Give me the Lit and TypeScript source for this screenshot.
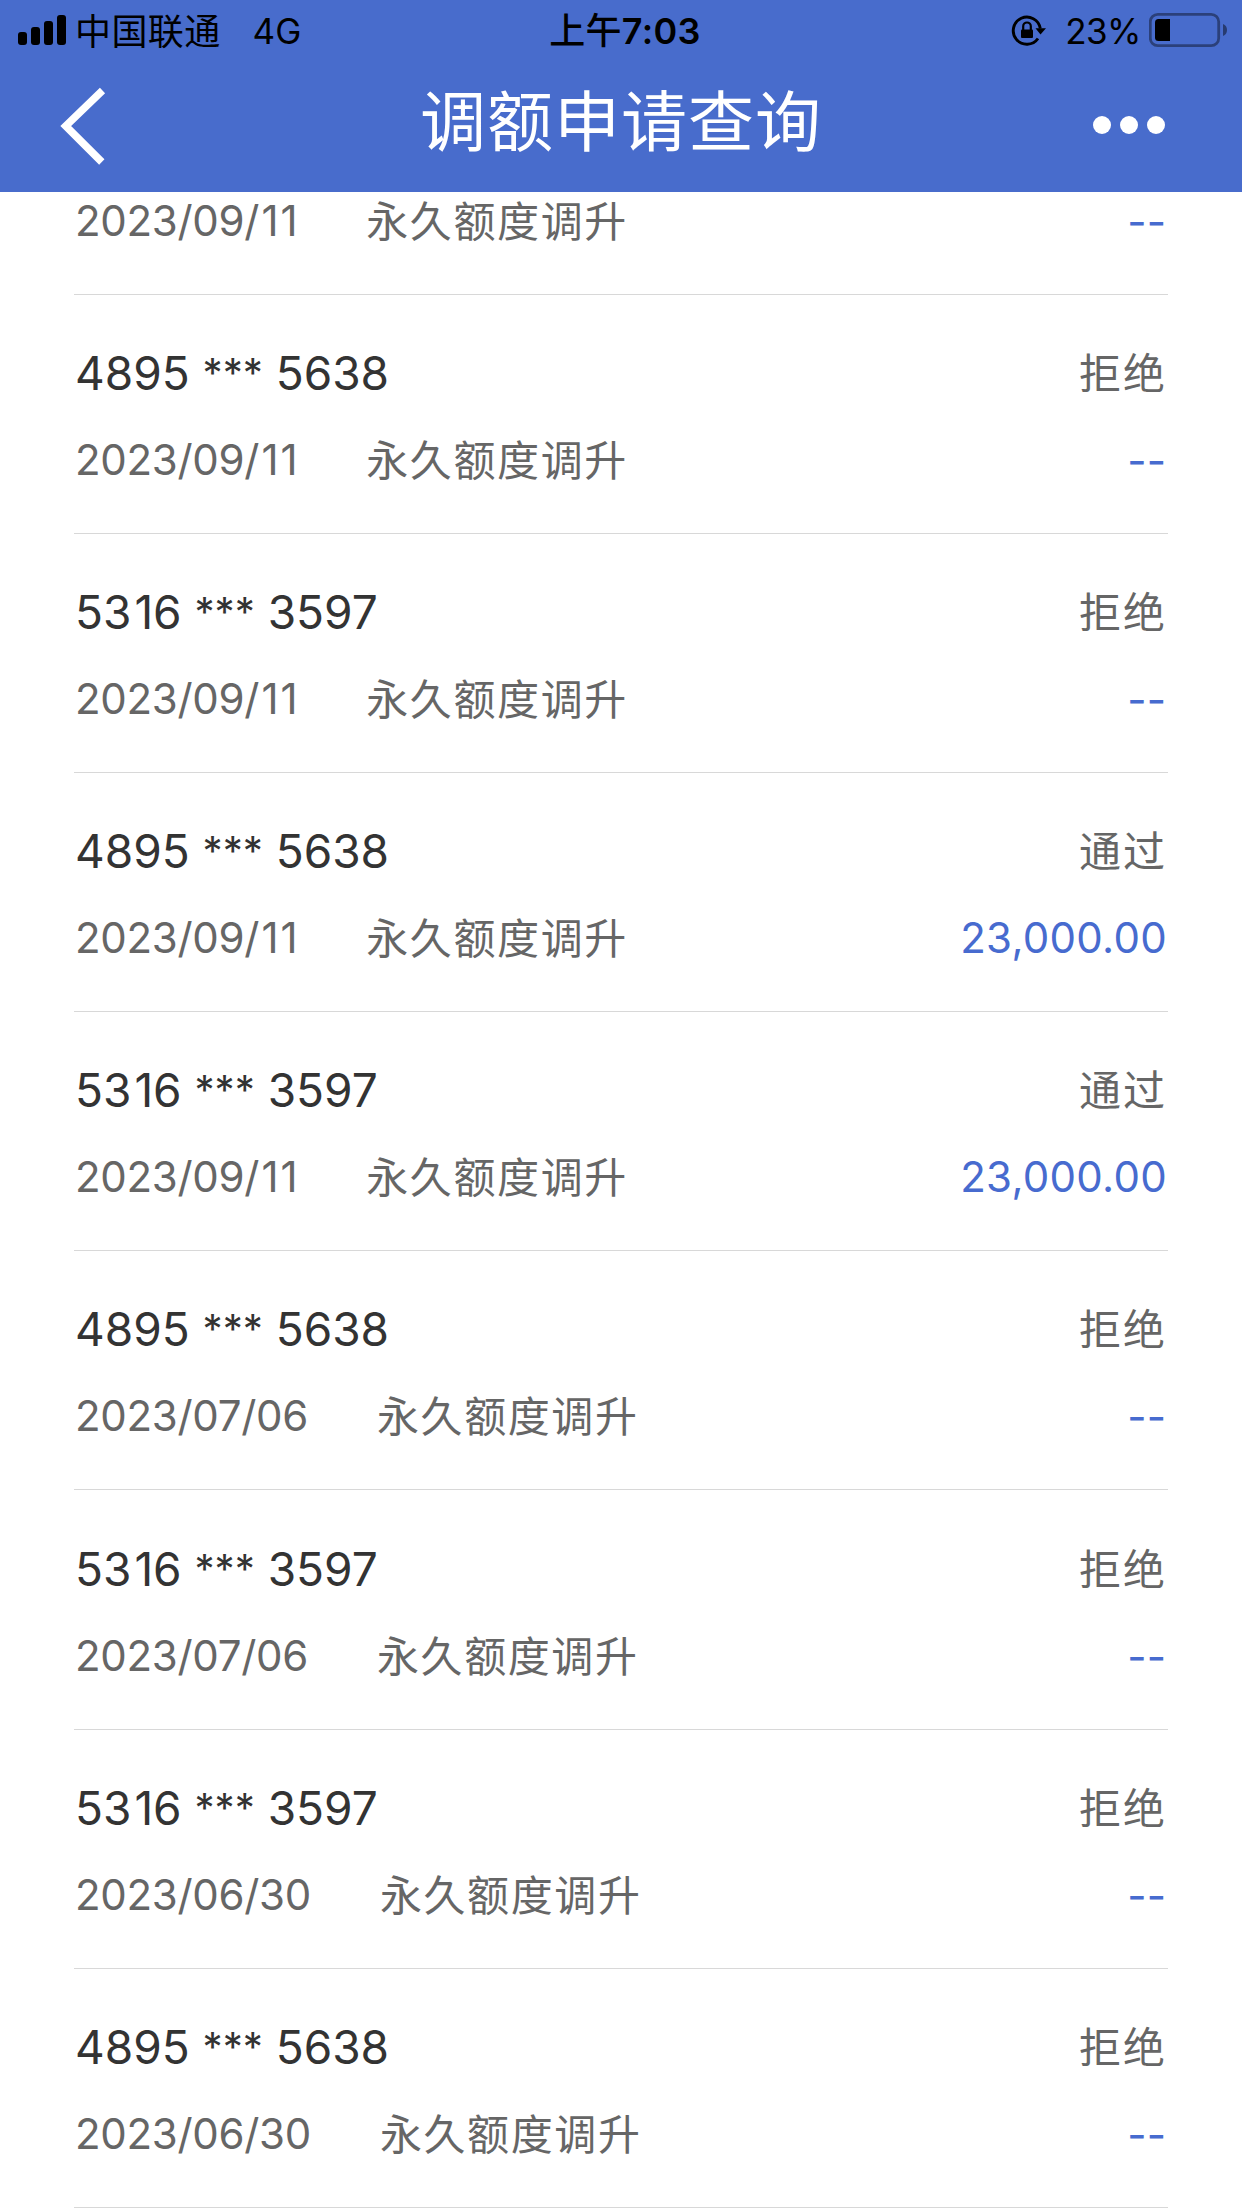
import { LitElement, html, css, svg, nothing } from "lit";
import { customElement, property } from "lit/decorators.js";

interface Entry {
  card?: string;
  date: string;
  status?: string;
  amount: string;
}

const KIND = "永久额度调升";

const ENTRIES: Entry[] = [
  { date: "2023/09/11", amount: "--" },
  { card: "4895 *** 5638", date: "2023/09/11", status: "拒绝", amount: "--" },
  { card: "5316 *** 3597", date: "2023/09/11", status: "拒绝", amount: "--" },
  { card: "4895 *** 5638", date: "2023/09/11", status: "通过", amount: "23,000.00" },
  { card: "5316 *** 3597", date: "2023/09/11", status: "通过", amount: "23,000.00" },
  { card: "4895 *** 5638", date: "2023/07/06", status: "拒绝", amount: "--" },
  { card: "5316 *** 3597", date: "2023/07/06", status: "拒绝", amount: "--" },
  { card: "5316 *** 3597", date: "2023/06/30", status: "拒绝", amount: "--" },
  { card: "4895 *** 5638", date: "2023/06/30", status: "拒绝", amount: "--" },
];

/* Inter's "1" is narrow and its asterisks are wide; both get their own metrics. */
const tuned = (text: string) =>
  text
    .split(/(1|\*+)/)
    .map((part) =>
      part === "1"
        ? html`<span class="one">1</span>`
        : part.startsWith("*")
          ? html`<span class="mask">${part}</span>`
          : part
    );

@customElement("status-bar")
class StatusBar extends LitElement {
  static styles = css`
    :host {
      display: grid;
      grid-template-columns: 1fr auto 1fr;
      height: 62px;
      padding: 0 14px 0 18px;
      box-sizing: border-box;
      color: #000;
      font-size: 35px;
      line-height: 62px;
      white-space: nowrap;
    }
    .side {
      display: flex;
      align-items: flex-start;
    }
    .end {
      justify-content: flex-end;
    }
    svg {
      display: block;
      height: 62px;
      flex: none;
    }
    .carrier {
      margin-left: 8px;
      padding-top: 1px;
      font-size: 36px;
      letter-spacing: 0.4px;
    }
    .network {
      margin-left: 32px;
    }
    .time {
      font-weight: 600;
      font-size: 36px;
      padding-left: 4px;
      letter-spacing: 0.3px;
    }
    .clock-cjk {
      font-weight: 500;
    }
    .battery-text {
      margin: 0 8px 0 18px;
      letter-spacing: -0.5px;
    }
  `;

  render() {
    return html`
      <div class="side">
        <svg width="49" viewBox="0 0 49 62">
          ${[32, 27, 21, 15].map(
            (y, i) => svg`<rect x=${i * 13} y=${y} width="9" height=${45 - y} rx="3" />`
          )}
        </svg>
        <span class="carrier">中国联通</span>
        <span class="network">4G</span>
      </div>
      <div class="time"><span class="clock-cjk">上午</span>7:03</div>
      <div class="side end">
        <svg width="36" viewBox="1012 0 36 62">
          <path
            d="M1039 38.500A13.600 13.600 0 1 1 1041.300 28.500"
            fill="none"
            stroke="#000"
            stroke-width="2.9"
          />
          <path d="M1036.500 28.300H1047L1041.500 34.500Z" />
          <rect x="1022" y="29.5" width="12" height="8.500" rx="1" />
          <path
            d="M1024.200 30V26.300a3.800 3.800 0 0 1 7.600 0V30"
            fill="none"
            stroke="#000"
            stroke-width="2.2"
          />
        </svg>
        <span class="battery-text">23%</span>
        <svg width="79" viewBox="1149 0 79 62">
          <rect
            x="1150.3"
            y="14.3"
            width="68.4"
            height="31.4"
            rx="7.5"
            fill="none"
            stroke="#000"
            stroke-opacity="0.4"
            stroke-width="2.8"
          />
          <path d="M1170 19V41H1158.500a3.500 3.500 0 0 1-3.500-3.500V22.500a3.500 3.500 0 0 1 3.500-3.500Z" />
          <path d="M1223 24a6.500 6.500 0 0 1 0 12Z" fill-opacity="0.45" />
        </svg>
      </div>
    `;
  }
}

@customElement("nav-bar")
class NavBar extends LitElement {
  static styles = css`
    :host {
      display: flex;
      justify-content: space-between;
      height: 130px;
      padding: 0 76px 0 60px;
      box-sizing: border-box;
      color: #fff;
    }
    .slot {
      flex: 1 1 0;
      display: flex;
    }
    .menu {
      justify-content: flex-end;
    }
    svg {
      display: block;
      height: 130px;
    }
    h1 {
      margin: 0;
      padding-left: 16px;
      font-size: 66px;
      font-weight: 400;
      line-height: 120px;
      letter-spacing: 1px;
      white-space: nowrap;
    }
  `;

  render() {
    return html`
      <div class="slot">
        <svg width="50" viewBox="60 62 50 130">
          <path
            d="M102.500 90.500L65.700 126L101.800 162"
            fill="none"
            stroke="#fff"
            stroke-width="7.5"
          />
        </svg>
      </div>
      <h1>调额申请查询</h1>
      <div class="slot menu">
        <svg width="74" viewBox="1092 62 74 130" fill="#fff">
          <circle cx="1102" cy="125" r="9" />
          <circle cx="1129" cy="125" r="9" />
          <circle cx="1156" cy="125" r="9" />
        </svg>
      </div>
    `;
  }
}

@customElement("quota-row")
class QuotaRow extends LitElement {
  @property({ attribute: false }) entry!: Entry;

  static styles = css`
    :host {
      display: flex;
      flex-direction: column;
      justify-content: flex-end;
      box-sizing: border-box;
      padding-bottom: 43px;
      border-bottom: 1px solid #d8d8d8;
      color: #666;
      font-size: 42px;
      white-space: nowrap;
    }
    .line {
      display: flex;
      justify-content: space-between;
      height: 60px;
      line-height: 60px;
      padding: 0 2px 0 1px;
    }
    .head {
      margin-bottom: 27px;
    }
    .detail {
      display: flex;
    }
    .card {
      color: #333;
      font-size: 46px;
    }
    .one {
      padding-left: 3px;
    }
    .date .one {
      padding-left: 2.3px;
    }
    .mask {
      display: inline-block;
      height: 50px;
      line-height: 50px;
      font-size: 40px;
      vertical-align: 3px;
    }
    .status {
      padding-top: 1px;
      letter-spacing: 2px;
      margin-right: -1px;
    }
    .date {
      letter-spacing: -0.3px;
    }
    .kind {
      padding-top: 1px;
      margin-left: 69px;
      letter-spacing: 1.6px;
    }
    .amount {
      color: #476bcf;
      letter-spacing: 0.3px;
      margin-right: -1px;
    }
    .amount.none {
      padding-top: 1px;
      margin-right: -0.5px;
    }
  `;

  render() {
    const { card, date, status, amount } = this.entry;
    return html`
      ${card
        ? html`<div class="line head">
            <span class="card">${tuned(card)}</span>
            <span class="status">${status}</span>
          </div>`
        : nothing}
      <div class="line">
        <div class="detail">
          <span class="date">${tuned(date)}</span><span class="kind">${KIND}</span>
        </div>
        <span class="amount ${amount === "--" ? "none" : ""}">${amount}</span>
      </div>
    `;
  }
}

@customElement("app-root")
class AppRoot extends LitElement {
  static styles = css`
    :host {
      display: flex;
      flex-direction: column;
      width: 1242px;
      height: 2208px;
      overflow: hidden;
      background: #fff;
      font-family: Inter, "Noto Sans CJK SC", sans-serif;
    }
    header {
      flex: none;
      background: #486ccc;
    }
    main {
      flex: none;
      padding: 0 74px;
    }
    quota-row {
      height: 239.1px;
    }
    quota-row.partial {
      height: 103px;
    }
  `;

  render() {
    return html`
      <header>
        <status-bar></status-bar>
        <nav-bar></nav-bar>
      </header>
      <main>
        ${ENTRIES.map(
          (e) => html`<quota-row class=${e.card ? "" : "partial"} .entry=${e}></quota-row>`
        )}
      </main>
    `;
  }
}
